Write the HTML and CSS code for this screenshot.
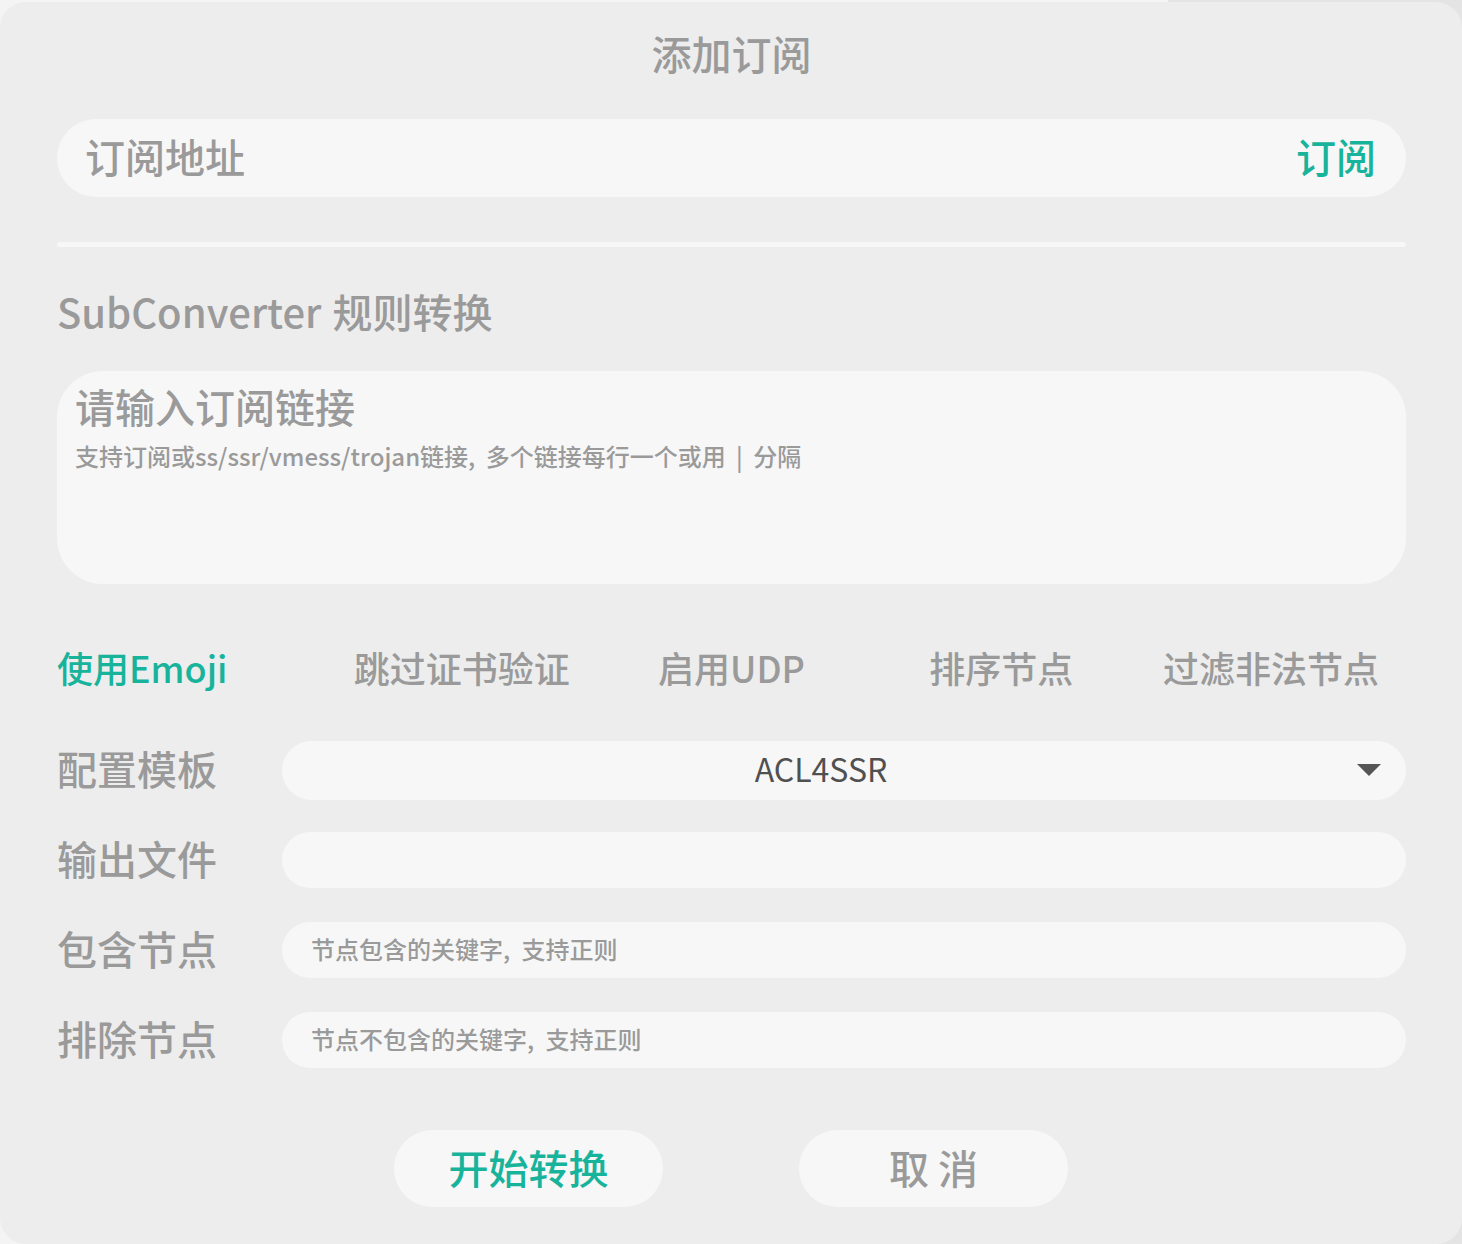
FILE: index.html
```html
<!DOCTYPE html>
<html lang="zh-CN">
<head>
<meta charset="utf-8">
<title>添加订阅</title>
<link rel="stylesheet" href="styles.css">
</head>
<body>
<div class="dialog">
  <div class="title">添加订阅</div>

  <div class="sub-input">
    <span class="placeholder-lg">订阅地址</span>
    <span class="sub-action">订阅</span>
  </div>

  <div class="divider"></div>

  <div class="section-title">SubConverter 规则转换</div>

  <div class="textarea">
    <div class="ta-main">请输入订阅链接</div>
    <div class="ta-hint">支持订阅或ss/ssr/vmess/trojan链接, 多个链接每行一个或用 | 分隔</div>
  </div>

  <div class="options">
    <span class="opt opt-first active">使用Emoji</span>
    <span class="opt">跳过证书验证</span>
    <span class="opt">启用UDP</span>
    <span class="opt">排序节点</span>
    <span class="opt">过滤非法节点</span>
  </div>

  <div class="form">
    <div class="form-row">
      <div class="label">配置模板</div>
      <div class="select">
        <span class="select-value">ACL4SSR</span>
        <span class="caret"></span>
      </div>
    </div>
    <div class="form-row">
      <div class="label">输出文件</div>
      <div class="field"></div>
    </div>
    <div class="form-row">
      <div class="label">包含节点</div>
      <div class="field"><span class="hint">节点包含的关键字, 支持正则</span></div>
    </div>
    <div class="form-row">
      <div class="label">排除节点</div>
      <div class="field"><span class="hint">节点不包含的关键字, 支持正则</span></div>
    </div>
  </div>

  <div class="actions">
    <div class="btn btn-primary">开始转换</div>
    <div class="btn">取 消</div>
  </div>
</div>
</body>
</html>
```

FILE: styles.css
```css
html, body {
  margin: 0;
  padding: 0;
}
body {
  width: 1462px;
  height: 1244px;
  overflow: hidden;
  background: linear-gradient(to right, #f4f4f4 1168px, #e4e4e4 1168px);
  font-family: "Noto Sans CJK SC", "Noto Sans", sans-serif;
  font-weight: 500;
  color: #9a9a9a;
}
.dialog {
  box-sizing: border-box;
  margin-top: 2px;
  height: 1242px;
  background: #ededed;
  border-radius: 26px;
  padding: 31px 56px 0 57px;
  display: flex;
  flex-direction: column;
}
.title {
  text-align: center;
  font-size: 40px;
  line-height: 40px;
  color: #9a9a9a;
}
.sub-input {
  margin-top: 46px;
  height: 78px;
  background: #f7f7f7;
  border-radius: 39px;
  display: flex;
  align-items: center;
  justify-content: space-between;
  padding: 0 30px 0 28px;
}
.placeholder-lg {
  font-size: 40px;
  line-height: 40px;
  padding-bottom: 4px;
  color: #9a9a9a;
}
.sub-action {
  font-size: 40px;
  line-height: 40px;
  padding-bottom: 4px;
  color: #17b39b;
}
.divider {
  margin-top: 45px;
  height: 5px;
  border-radius: 3px;
  background: #f7f7f7;
}
.section-title {
  margin-top: 44px;
  font-size: 40px;
  line-height: 40px;
  word-spacing: 2px;
  color: #9a9a9a;
}
.textarea {
  margin-top: 40px;
  height: 213px;
  box-sizing: border-box;
  background: #f7f7f7;
  border-radius: 46px;
  padding: 15px 18px 0;
}
.ta-main {
  font-size: 40px;
  line-height: 40px;
  color: #9a9a9a;
}
.ta-hint {
  margin-top: 18px;
  font-size: 24px;
  line-height: 24px;
  word-spacing: 5px;
  color: #9a9a9a;
}
.options {
  margin-top: 63px;
  display: grid;
  grid-template-columns: repeat(5, 1fr);
  font-size: 36px;
  line-height: 40px;
}
.opt {
  text-align: center;
  color: #9a9a9a;
}
.opt-first {
  text-align: left;
}
.opt.active {
  color: #17b39b;
}
.form {
  margin-top: 53px;
  display: flex;
  flex-direction: column;
  gap: 30px;
}
.form-row {
  height: 60px;
  display: flex;
  align-items: center;
}
.label {
  width: 225px;
  flex: none;
  font-size: 40px;
  line-height: 40px;
  padding-bottom: 4px;
  color: #9a9a9a;
}
.select {
  flex: 1;
  height: 59px;
  background: #f7f7f7;
  border-radius: 30px;
  display: flex;
  align-items: center;
  padding-left: 3px;
}
.select-value {
  flex: 1;
  text-align: center;
  font-size: 32px;
  line-height: 40px;
  padding-bottom: 4px;
  font-weight: 400;
  color: #505050;
}
.caret {
  width: 0;
  height: 0;
  border-left: 12px solid transparent;
  border-right: 12px solid transparent;
  border-top: 12px solid #555555;
  margin-right: 25px;
}
.field {
  flex: 1;
  height: 56px;
  box-sizing: border-box;
  background: #f7f7f7;
  border-radius: 28px;
  display: flex;
  align-items: center;
  padding-left: 29px;
}
.hint {
  font-size: 24px;
  line-height: 24px;
  padding-bottom: 2px;
  word-spacing: 6px;
  color: #9a9a9a;
}
.actions {
  margin-top: 60px;
  display: flex;
  justify-content: center;
  gap: 136px;
  padding-right: 1px;
}
.btn {
  width: 269px;
  height: 77px;
  border-radius: 39px;
  background: #f7f7f7;
  display: flex;
  align-items: center;
  justify-content: center;
  font-size: 40px;
  line-height: 40px;
  padding-bottom: 4px;
  box-sizing: border-box;
  color: #9a9a9a;
}
.btn-primary {
  color: #17b39b;
}
```
